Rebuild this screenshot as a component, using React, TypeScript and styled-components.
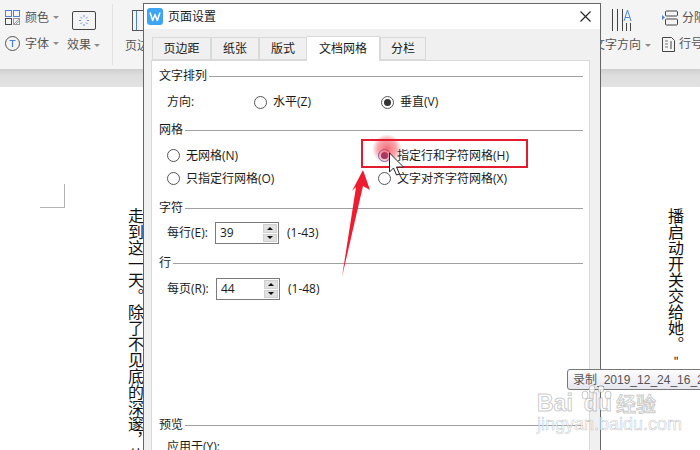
import React from "react";
import styled, { createGlobalStyle } from "styled-components";

const Global = createGlobalStyle`
  html, body { margin: 0; padding: 0; background: #fff; }
  * { box-sizing: border-box; }
  svg { flex: none; }
`;

const UI_FONT = `"Open Sans", "Noto Sans CJK SC", sans-serif`;

const Page = styled.div`
  position: relative;
  width: 700px;
  height: 450px;
  overflow: hidden;
  display: flex;
  flex-direction: column;
  font: 12px/16px ${UI_FONT};
  color: #222;
  background: #fff;
`;

const Ribbon = styled.div`
  height: 69px;
  flex: none;
  display: flex;
  background: #f4f4f4;
  color: #555;
`;

const ThemeGroup = styled.div`
  width: 57px;
  margin-left: 5px;
  display: flex;
  flex-direction: column;
  padding-top: 10px;
  gap: 11px;
`;

const ThemeItem = styled.div`
  display: flex;
  align-items: center;
  height: 15px;
  gap: 5px;
`;

const Caret = styled.span<{ $gap?: number }>`
  width: 0;
  height: 0;
  margin-left: ${(p) => p.$gap ?? 3}px;
  border-left: 3px solid transparent;
  border-right: 3px solid transparent;
  border-top: 3px solid #8c8c8c;
`;

const EffectGroup = styled.div`
  width: 43px;
  display: flex;
  flex-direction: column;
  align-items: center;
  padding-top: 11px;
  gap: 7px;
`;

const EffectLabel = styled.div`
  display: flex;
  align-items: center;
`;

const Divider = styled.div`
  width: 1px;
  height: 61px;
  margin: 4px 0 0 7px;
  background: #e2e2e2;
`;

const MarginGroup = styled.div`
  margin-left: 10px;
  width: 40px;
  display: flex;
  flex-direction: column;
  align-items: center;
  padding-top: 10px;
  gap: 7px;
`;

const DirectionGroup = styled.div`
  margin-left: auto;
  width: 52px;
  display: flex;
  flex-direction: column;
  align-items: center;
  padding-top: 9px;
  gap: 5px;
`;

const DirectionLabel = styled.div`
  display: flex;
  align-items: center;
  white-space: nowrap;
`;

const LayoutGroup = styled.div`
  width: 38px;
  margin-left: 14px;
  display: flex;
  flex-direction: column;
  padding-top: 10px;
  gap: 10px;
  white-space: nowrap;
`;

const LayoutItem = styled.div`
  display: flex;
  align-items: center;
  height: 16px;
  gap: 4px;
`;

const Shade = styled.div`
  height: 18px;
  flex: none;
  background: linear-gradient(#cfcfcf, #dedede 35%, #e2e2e2);
`;

const Doc = styled.div`
  flex: 1;
  display: flex;
  align-items: flex-start;
  overflow: hidden;
  background: #fff;
`;

const CropMark = styled.div`
  width: 25px;
  height: 24px;
  margin: 97px 0 0 40px;
  border-right: 1px solid #b4b4b4;
  border-bottom: 1px solid #b4b4b4;
`;

const VerticalText = styled.div<{ $gapLeft?: number }>`
  writing-mode: vertical-rl;
  white-space: nowrap;
  margin: 121px 0 0 ${(p) => p.$gapLeft ?? 0}px;
  font: 16px/16px "Noto Sans CJK SC", sans-serif;
  color: #111;
`;

const QuoteMark = styled.span`
  text-orientation: upright;
  font-size: 11px;
  margin-top: 3px;
  margin-right: 0;
`;

const Dialog = styled.div`
  position: absolute;
  left: 143px;
  top: 3px;
  width: 458px;
  height: 470px;
  display: flex;
  flex-direction: column;
  border: 1px solid #666;
  background: #f0f0f0;
  color: #1a1a1a;
`;

const TitleBar = styled.div`
  height: 25px;
  flex: none;
  display: flex;
  align-items: center;
  padding: 0 9px 0 3px;
  background: #fff;
  gap: 5px;
`;

const CloseBox = styled.div`
  margin-left: auto;
  display: flex;
`;

const TabBar = styled.div`
  display: flex;
  align-items: flex-end;
  height: 31px;
  flex: none;
  padding-left: 8px;
  position: relative;
  z-index: 1;
`;

const Tab = styled.div<{ $active?: boolean; $width: number }>`
  width: ${(p) => p.$width}px;
  height: ${(p) => (p.$active ? 25 : 23)}px;
  margin-bottom: ${(p) => (p.$active ? -1 : 0)}px;
  display: flex;
  align-items: center;
  justify-content: center;
  background: ${(p) => (p.$active ? "#fff" : "#f0f0f0")};
  border: 1px solid #d9d9d9;
  border-bottom: ${(p) => (p.$active ? "none" : "1px solid #d9d9d9")};
  border-left-width: ${(p) => (p.$active ? 0 : 1)}px;
`;

const Panel = styled.div`
  flex: 1;
  margin: 0 10px 0 7px;
  padding: 7px 6px 0 7px;
  background: #fff;
  border: 1px solid #d9d9d9;
`;

const Legend = styled.div<{ $top: number }>`
  display: flex;
  align-items: center;
  gap: 2px;
  height: 16px;
  margin-top: ${(p) => p.$top}px;
  white-space: nowrap;
  &::after {
    content: "";
    flex: 1;
    height: 1px;
    background: #a0a0a0;
  }
`;

const DirectionRow = styled.div`
  display: grid;
  grid-template-columns: 87px 127px auto;
  align-items: center;
  height: 18px;
  margin: 9px 0 0 8px;
`;

const GridOptions = styled.div`
  display: grid;
  grid-template-columns: 211px auto;
  grid-auto-rows: 17px;
  row-gap: 6px;
  margin: 9px 0 0 8px;
`;

const RadioLabel = styled.label`
  display: flex;
  align-items: center;
  gap: 6px;
  white-space: nowrap;
`;

const RadioMark = styled.span<{ $on?: boolean; $focus?: boolean }>`
  width: 13px;
  height: 13px;
  flex: none;
  border-radius: 50%;
  border: 1.4px solid ${(p) => (p.$focus ? "#4f78d6" : "#555")};
  background: #fff;
  display: flex;
  align-items: center;
  justify-content: center;
  &::after {
    content: "";
    display: ${(p) => (p.$on ? "block" : "none")};
    width: 7px;
    height: 7px;
    border-radius: 50%;
    background: ${(p) => (p.$focus ? "#5a3d86" : "#333")};
  }
`;

const SpinRow = styled.div<{ $top: number }>`
  display: flex;
  align-items: center;
  height: 22px;
  margin: ${(p) => p.$top}px 0 0 8px;
`;

const SpinLabel = styled.span<{ $width: number }>`
  width: ${(p) => p.$width}px;
  white-space: nowrap;
`;

const SpinBox = styled.div`
  width: 64px;
  height: 22px;
  display: flex;
  align-items: center;
  padding: 0 1px 0 4px;
  border: 1px solid #7a7a7a;
  background: #fff;
`;

const SpinValue = styled.span`
  flex: 1;
`;

const SpinButtons = styled.div`
  width: 14px;
  height: 18px;
  display: flex;
  flex-direction: column;
  gap: 1px;
`;

const SpinButton = styled.div<{ $down?: boolean }>`
  flex: 1;
  display: flex;
  align-items: center;
  justify-content: center;
  background: #e1e1e1;
  border: 1px solid #d0d0d0;
  &::after {
    content: "";
    border-left: 3px solid transparent;
    border-right: 3px solid transparent;
    ${(p) => (p.$down ? "border-top: 3px solid #111;" : "border-bottom: 3px solid #111;")}
  }
`;

const SpinRange = styled.span`
  margin-left: 8px;
`;

const ApplyRow = styled.div`
  margin: 6px 0 0 8px;
  white-space: nowrap;
`;

const Highlight = styled.div`
  position: absolute;
  left: 361px;
  top: 139px;
  width: 167px;
  height: 29px;
  border: 2px solid #e31b2d;
`;

const Glow = styled.div`
  position: absolute;
  left: 372px;
  top: 134px;
  width: 30px;
  height: 30px;
  border-radius: 50%;
  background: radial-gradient(circle, rgba(240, 50, 65, 0.72), rgba(240, 50, 65, 0.42) 45%, rgba(240, 50, 65, 0) 70%);
`;

const Overlay = styled.svg`
  position: absolute;
  left: 0;
  top: 0;
  width: 700px;
  height: 450px;
  pointer-events: none;
`;

const Tooltip = styled.div`
  position: absolute;
  left: 567px;
  top: 369px;
  width: 150px;
  height: 21px;
  padding: 2px 0 0 5px;
  border: 1px solid #777;
  border-radius: 3px;
  background: linear-gradient(#fdfdfd, #e6e6f0);
  color: #555;
  font: 12px/16px "Liberation Sans", "Noto Sans CJK SC", sans-serif;
  white-space: nowrap;
`;

const Watermark = styled.div`
  position: absolute;
  left: 537px;
  top: 385px;
  width: 130px;
  display: flex;
  flex-direction: column;
  color: rgba(255, 255, 255, 0.78);
  -webkit-text-stroke: 1px rgba(120, 120, 120, 0.4);
  white-space: nowrap;
`;

const WaterBrand = styled.div`
  display: flex;
  align-items: flex-end;
  height: 30px;
  font: bold 23px/24px "Liberation Sans", sans-serif;
`;

const WaterDu = styled.span`
  margin-left: 11px;
`;

const WaterCn = styled.span`
  margin-left: 4px;
  font: 500 20px/22px "Noto Sans CJK SC", sans-serif;
`;

const WaterUrl = styled.div`
  margin-top: 1px;
  font: 18px/16px "Liberation Sans", sans-serif;
  -webkit-text-stroke: 0.6px rgba(120, 120, 120, 0.4);
`;

const PawIcon = styled.svg`
  position: absolute;
  left: 43px;
  top: 0;
`;

const Radio = ({ on, focus, children }: { on?: boolean; focus?: boolean; children: React.ReactNode }) => (
  <RadioLabel>
    <RadioMark $on={on} $focus={focus} />
    {children}
  </RadioLabel>
);

const Spin = ({ label, width, value, range, top }: { label: string; width: number; value: string; range: string; top: number }) => (
  <SpinRow $top={top}>
    <SpinLabel $width={width}>{label}</SpinLabel>
    <SpinBox>
      <SpinValue>{value}</SpinValue>
      <SpinButtons>
        <SpinButton />
        <SpinButton $down />
      </SpinButtons>
    </SpinBox>
    <SpinRange>{range}</SpinRange>
  </SpinRow>
);

const ColorIcon = () => (
  <svg width="15" height="15" viewBox="0 0 15 15" fill="none" stroke="#4a4a4a">
    <rect x="0.5" y="0.5" width="6" height="6" stroke="#4a84d8" />
    <rect x="8.5" y="0.5" width="6" height="6" stroke="#4a84d8" />
    <rect x="0.5" y="8.5" width="6" height="6" />
    <rect x="8.5" y="8.5" width="6" height="6" stroke="#999" />
    <path d="M9 14l5-5M11 14l3-3" stroke="#999" />
  </svg>
);

const FontIcon = () => (
  <svg width="15" height="15" viewBox="0 0 15 15" fill="none">
    <circle cx="7.5" cy="7.5" r="7" stroke="#555" />
    <path d="M4.5 4.5h6M7.5 4.5v6.5" stroke="#4a84d8" strokeWidth="1.2" />
  </svg>
);

const EffectIcon = () => (
  <svg width="24" height="19" viewBox="0 0 24 19" fill="none">
    <rect x="0.5" y="0.5" width="23" height="18" rx="1.5" stroke="#444" />
    <path d="M12 4v2M12 13v2M7 9.5h2M15 9.5h2M8.5 6l1.5 1.5M15.5 6L14 7.5M8.5 13l1.5-1.5M15.5 13L14 11.5" stroke="#5b8fdc" />
  </svg>
);

const MarginIcon = () => (
  <svg width="22" height="21" viewBox="0 0 22 21" fill="none" stroke="#555">
    <rect x="0.5" y="0.5" width="21" height="20" />
    <path d="M4.5 1v19" stroke="#4a84d8" />
  </svg>
);

const DirectionIcon = () => (
  <svg width="22" height="23" viewBox="0 0 22 23" fill="none">
    <path d="M1.5 0v22M6.5 0v22M11.5 0v22" stroke="#444" />
    <path d="M13 12L16.5 1 20 12M14.2 8.5h4.6" stroke="#4a84d8" />
    <path d="M15.5 14v8M19.5 14v8" stroke="#444" />
  </svg>
);

const ColumnsIcon = () => (
  <svg width="16" height="16" viewBox="0 0 16 16" fill="none">
    <path d="M0 5l3 2.5L0 10z" fill="#4a84d8" />
    <rect x="3.5" y="1" width="12" height="5" rx="1" stroke="#444" />
    <rect x="3.5" y="9" width="12" height="6" rx="1" stroke="#444" />
  </svg>
);

const LineNumberIcon = () => (
  <svg width="13" height="15" viewBox="0 0 13 15" fill="none" stroke="#444">
    <path d="M0.5 0.5h9l3 3v11h-12z" />
    <path d="M3 4h3M3 7h3M3 10h3" stroke="#777" />
    <path d="M9 4v8" />
  </svg>
);

const AppLogo = () => (
  <svg width="16" height="17" viewBox="0 0 16 17" fill="none">
    <rect width="16" height="17" rx="3" fill="#3ea4f4" />
    <path d="M3 4.5l2.7 8 2.3-6 2.3 6 2.7-8" stroke="#fff" strokeWidth="1.5" strokeLinejoin="round" />
  </svg>
);

const CloseIcon = () => (
  <svg width="11" height="11" viewBox="0 0 11 11" stroke="#222" strokeWidth="1.1">
    <path d="M0.5 0.5l10 10M10.5 0.5l-10 10" />
  </svg>
);

export default function App() {
  return (
    <>
      <Global />
      <Page>
        <Ribbon>
          <ThemeGroup>
            <ThemeItem>
              <ColorIcon />颜色<Caret $gap={-1} />
            </ThemeItem>
            <ThemeItem>
              <FontIcon />字体<Caret $gap={-1} />
            </ThemeItem>
          </ThemeGroup>
          <EffectGroup>
            <EffectIcon />
            <EffectLabel>效果<Caret /></EffectLabel>
          </EffectGroup>
          <Divider />
          <MarginGroup>
            <MarginIcon />
            <span>页边距</span>
          </MarginGroup>
          <DirectionGroup>
            <DirectionIcon />
            <DirectionLabel>文字方向<Caret $gap={4} /></DirectionLabel>
          </DirectionGroup>
          <LayoutGroup>
            <LayoutItem><ColumnsIcon />分隔符</LayoutItem>
            <LayoutItem><LineNumberIcon />行号</LayoutItem>
          </LayoutGroup>
        </Ribbon>
        <Shade />
        <Doc>
          <CropMark />
          <VerticalText $gapLeft={63}>走到这一天。除了不见底的深邃，什么</VerticalText>
          <VerticalText $gapLeft={524}>播启动开关交给她。<QuoteMark>"</QuoteMark></VerticalText>
        </Doc>

        <Dialog>
          <TitleBar>
            <AppLogo />
            页面设置
            <CloseBox><CloseIcon /></CloseBox>
          </TitleBar>
          <TabBar>
            <Tab $width={59}>页边距</Tab>
            <Tab $width={48}>纸张</Tab>
            <Tab $width={48}>版式</Tab>
            <Tab $active $width={73}>文档网格</Tab>
            <Tab $width={46}>分栏</Tab>
          </TabBar>
          <Panel>
            <Legend $top={0}>文字排列</Legend>
            <DirectionRow>
              <span>方向:</span>
              <Radio>水平(Z)</Radio>
              <Radio on>垂直(V)</Radio>
            </DirectionRow>
            <Legend $top={11}>网格</Legend>
            <GridOptions>
              <Radio>无网格(N)</Radio>
              <Radio on focus>指定行和字符网格(H)</Radio>
              <Radio>只指定行网格(O)</Radio>
              <Radio>文字对齐字符网格(X)</Radio>
            </GridOptions>
            <Legend $top={13}>字符</Legend>
            <Spin label="每行(E):" width={48} value="39" range="(1-43)" top={6} />
            <Legend $top={11}>行</Legend>
            <Spin label="每页(R):" width={49} value="44" range="(1-48)" top={7} />
            <Legend $top={117}>预览</Legend>
            <ApplyRow>应用于(Y):</ApplyRow>
          </Panel>
        </Dialog>

        <Glow />
        <Highlight />
        <Overlay viewBox="0 0 700 450">
          <polygon points="363,170 370,190 363,186 342,277 356,187 352,191" fill="#ee1c2e" />
          <path d="M389.5 153v19l4-4 3 7 3-1-3-7h7z" fill="#fff" stroke="#222" strokeWidth="1" />
        </Overlay>

        <Tooltip>录制_2019_12_24_16_23_45</Tooltip>
        <Watermark>
          <PawIcon width="34" height="28" viewBox="0 0 34 28" fill="rgba(255,255,255,.72)" stroke="rgba(120,120,120,.4)">
            <ellipse cx="5" cy="10" rx="3" ry="4" />
            <ellipse cx="12" cy="4" rx="3" ry="3.5" />
            <ellipse cx="21" cy="4" rx="3" ry="3.5" />
            <ellipse cx="28" cy="10" rx="3" ry="4" />
          </PawIcon>
          <WaterBrand>Bai<WaterDu>du</WaterDu><WaterCn>经验</WaterCn></WaterBrand>
          <WaterUrl>jingyan.baidu.com</WaterUrl>
        </Watermark>
      </Page>
    </>
  );
}
